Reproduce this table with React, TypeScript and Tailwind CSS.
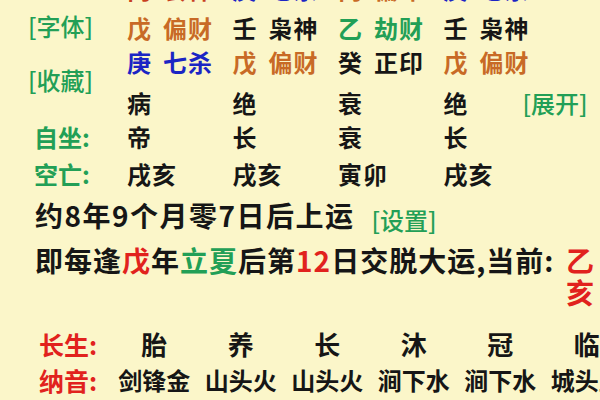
import React from "react";

const font = "font-['Noto_Sans_CJK_SC','Noto_Sans',sans-serif]";

type Pillar = { stem: string; god: string; color: string };

const orange = "text-[#c86a26]";
const blue = "text-[#1b25c4]";
const green = "text-[#229f56]";
const black = "text-[#161616]";
const red = "text-[#e1221d]";

const rows: Pillar[][] = [
  [
    { stem: "丙", god: "食神", color: "text-[#c8401f]" },
    { stem: "庚", god: "七杀", color: blue },
    { stem: "丙", god: "偏印", color: orange },
    { stem: "庚", god: "七杀", color: blue },
  ],
  [
    { stem: "戊", god: "偏财", color: orange },
    { stem: "壬", god: "枭神", color: black },
    { stem: "乙", god: "劫财", color: green },
    { stem: "壬", god: "枭神", color: black },
  ],
  [
    { stem: "庚", god: "七杀", color: blue },
    { stem: "戊", god: "偏财", color: orange },
    { stem: "癸", god: "正印", color: black },
    { stem: "戊", god: "偏财", color: orange },
  ],
];

const changSheng = ["胎", "养", "长", "沐", "冠", "临"];
const naYin = ["剑锋金", "山头火", "山头火", "涧下水", "涧下水", "城头土"];

function Cell({ p }: { p: Pillar }) {
  return (
    <div className={`flex w-[105.5px] shrink-0 tracking-[1px] ${p.color}`}>
      <span>{p.stem}</span>
      <span className="ml-[11px]">{p.god}</span>
    </div>
  );
}

function PlainRow({ label, items, h }: { label: string; items: string[]; h: string }) {
  return (
    <div className={`flex items-center ${h}`}>
      <div className={`w-[127px] shrink-0 pl-[34px] font-bold ${green}`}>{label}</div>
      {items.map((t, i) => (
        <div key={i} className={`w-[105.5px] shrink-0 font-bold tracking-[1px] ${black}`}>
          {t}
        </div>
      ))}
    </div>
  );
}

export default function App() {
  return (
    <div className={`h-[400px] w-[600px] overflow-hidden bg-[#fbf6c9] text-[24px] leading-none ${font}`}>
      <div className="-mt-[33px] flex">
        <div className={`flex w-[127px] shrink-0 flex-col pl-[28px] pt-[42px] font-medium ${green}`}>
          <div className="flex h-[34px] items-center">[字体]</div>
          <div className="mt-[20px] flex h-[34px] items-center">[收藏]</div>
        </div>
        <div className="flex flex-1 flex-col font-bold">
          {rows.map((r, i) => (
            <div key={i} className={`flex items-center ${i === 0 ? "h-[44px]" : "h-[34px]"}`}>
              {r.map((p, j) => (
                <Cell key={j} p={p} />
              ))}
            </div>
          ))}
          <div className={`mt-[7px] flex h-[34px] items-center ${black}`}>
            <div className="w-[105.5px] shrink-0">病</div>
            <div className="w-[105.5px] shrink-0">绝</div>
            <div className="w-[105.5px] shrink-0">衰</div>
            <div className="w-[79px] shrink-0">绝</div>
            <div className={`font-medium ${green}`}>[展开]</div>
          </div>
        </div>
      </div>

      <PlainRow label="自坐:" items={["帝", "长", "衰", "长"]} h="h-[34px]" />
      <PlainRow label="空亡:" items={["戌亥", "戌亥", "寅卯", "戌亥"]} h="h-[40px]" />

      <div className={`flex h-[42px] items-center pl-[35px] text-[28px] font-bold tracking-[1.5px] ${black}`}>
        <span>约8年9个月零7日后上运</span>
        <span className={`ml-[17px] mt-[10px] text-[24px] font-medium tracking-normal ${green}`}>[设置]</span>
      </div>

      <div className={`mt-[8px] flex h-[32px] items-center pl-[35px] pr-[6px] text-[28px] font-bold tracking-[1px] ${black}`}>
        <span className="whitespace-nowrap">
          即每逢<span className={red}>戊</span>年<span className={green}>立夏</span>后第
          <span className={red}>12</span>日交脱大运,当前:
        </span>
        <span className={`ml-auto w-[28px] shrink-0 tracking-normal ${red}`}>乙</span>
      </div>
      <div className={`flex h-[32px] items-center justify-end pr-[6px] text-[28px] font-bold ${red}`}>
        <span className="w-[28px]">亥</span>
      </div>

      <div className="mt-[19px] flex h-[34px] items-center">
        <div className={`w-[111px] shrink-0 pl-[39px] text-[25px] font-bold ${red}`}>长生:</div>
        {changSheng.map((t, i) => (
          <div key={i} className={`w-[86.5px] shrink-0 text-center text-[26px] font-bold ${black}`}>
            {t}
          </div>
        ))}
      </div>
      <div className="mt-[2px] flex h-[34px] items-center">
        <div className={`w-[111px] shrink-0 pl-[39px] text-[25px] font-bold ${red}`}>纳音:</div>
        {naYin.map((t, i) => (
          <div key={i} className={`w-[86.5px] shrink-0 whitespace-nowrap text-center font-bold ${black}`}>
            {t}
          </div>
        ))}
      </div>
    </div>
  );
}
